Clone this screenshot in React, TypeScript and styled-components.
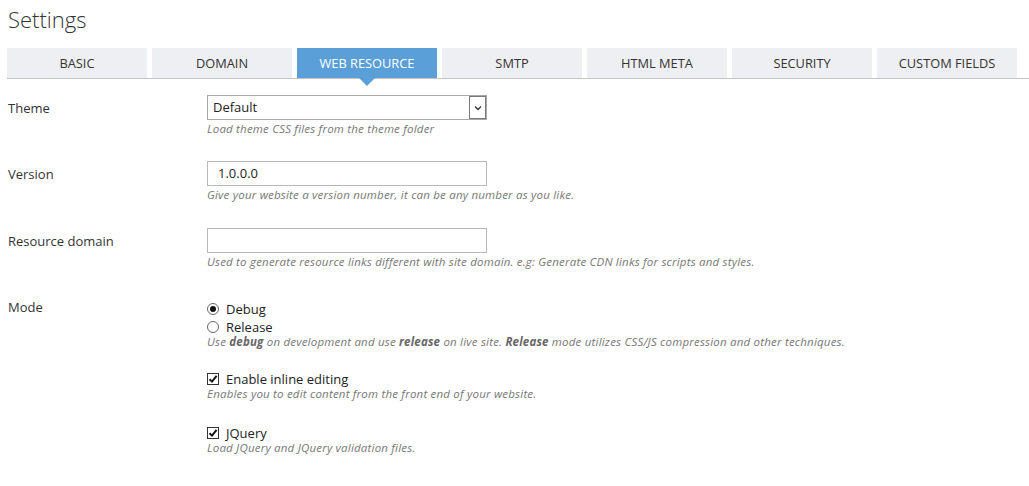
import React from "react";
import styled, { createGlobalStyle } from "styled-components";

const Global = createGlobalStyle`
  html, body { margin: 0; padding: 0; background: #fff; }
  body { font-family: "Open Sans", "Noto Sans", sans-serif; color: #333; }
`;

const Page = styled.div`
  padding: 0 0 0 8px;
`;

const Title = styled.h1`
  margin: 0;
  padding-top: 4px;
  height: 44px;
  font-size: 22px;
  font-weight: 300;
  line-height: 30px;
  color: #333;
`;

const TabBar = styled.div`
  display: flex;
  gap: 5px;
  margin-left: -1px;
  border-bottom: 1px solid #c4c4c4;
  height: 30px;
`;

const Tab = styled.div<{ $active?: boolean }>`
  position: relative;
  width: 140px;
  height: 30px;
  display: flex;
  align-items: center;
  justify-content: center;
  font-size: 12.8px;
  text-transform: uppercase;
  background: ${(p) => (p.$active ? "#5a9fd8" : "#eeeff2")};
  color: ${(p) => (p.$active ? "#fff" : "#333")};
  ${(p) =>
    p.$active &&
    `
    &::after {
      content: "";
      position: absolute;
      left: 50%;
      top: 30px;
      margin-left: -8px;
      border-left: 8px solid transparent;
      border-right: 8px solid transparent;
      border-top: 8px solid #5a9fd8;
    }
  `}
`;

const Form = styled.div`
  padding-top: 16px;
`;

const Row = styled.div<{ $mb?: number }>`
  display: flex;
  margin-bottom: ${(p) => p.$mb ?? 25}px;
`;

const Label = styled.div`
  width: 199px;
  flex: none;
  font-size: 13px;
  line-height: 25px;
  padding-top: 1px;
`;

const Control = styled.div`
  display: flex;
  flex-direction: column;
`;

const Field = styled.div`
  box-sizing: border-box;
  width: 280px;
  height: 25px;
  border: 1px solid #b9b9b9;
  font-size: 13px;
  line-height: 23px;
  padding-left: 10px;
  color: #222;
  background: #fff;
`;

const SelectBox = styled.div`
  position: relative;
  box-sizing: border-box;
  width: 280px;
  height: 25px;
  border: 1px solid #a9a9a9;
  font-size: 13px;
  line-height: 23px;
  padding-left: 5px;
  color: #222;
  background: #fff;
`;

const SelectArrow = styled.div`
  position: absolute;
  right: 0;
  top: 0;
  width: 17px;
  height: 23px;
  box-sizing: border-box;
  border: 1px solid #7a7a7a;
  display: flex;
  align-items: center;
  justify-content: center;
  background: #fff;
`;

const Help = styled.div<{ $mt?: number }>`
  font-size: 11.5px;
  letter-spacing: 0.2px;
  font-style: italic;
  color: #777;
  line-height: 15px;
  margin-top: ${(p) => p.$mt ?? 1}px;
  white-space: nowrap;
  b { font-weight: 700; color: #666; }
`;

const Options = styled.div<{ $mt?: number }>`
  display: flex;
  flex-direction: column;
  margin-top: ${(p) => p.$mt ?? 0}px;
`;

const Option = styled.div`
  display: flex;
  align-items: center;
  height: 18px;
  font-size: 13px;
  gap: 7px;
  color: #222;
`;

const Radio = styled.span<{ $on?: boolean }>`
  box-sizing: border-box;
  width: 12px;
  height: 12px;
  border-radius: 50%;
  border: 1px solid #666;
  display: flex;
  align-items: center;
  justify-content: center;
  &::after {
    content: "";
    width: 6px;
    height: 6px;
    border-radius: 50%;
    background: ${(p) => (p.$on ? "#111" : "transparent")};
  }
`;

const Box = styled.span`
  box-sizing: border-box;
  width: 12px;
  height: 12px;
  border: 1px solid #333;
  display: flex;
  align-items: center;
  justify-content: center;
  background: #fff;
`;

const Check = () => (
  <Box>
    <svg width="10" height="10" viewBox="0 0 10 10">
      <path d="M1.5 5.2 L4 7.6 L8.6 1.8" fill="none" stroke="#111" strokeWidth="1.9" />
    </svg>
  </Box>
);

const tabs = ["Basic", "Domain", "Web Resource", "SMTP", "HTML Meta", "Security", "Custom Fields"];

export default function App() {
  return (
    <Page>
      <Global />
      <Title>Settings</Title>
      <TabBar>
        {tabs.map((t) => (
          <Tab key={t} $active={t === "Web Resource"}>
            {t}
          </Tab>
        ))}
      </TabBar>
      <Form>
        <Row>
          <Label>Theme</Label>
          <Control>
            <SelectBox>
              Default
              <SelectArrow>
                <svg width="8" height="6" viewBox="0 0 8 6">
                  <path d="M1 1.5 L4 4.5 L7 1.5" fill="none" stroke="#333" strokeWidth="1.3" />
                </svg>
              </SelectArrow>
            </SelectBox>
            <Help>Load theme CSS files from the theme folder</Help>
          </Control>
        </Row>
        <Row $mb={26}>
          <Label>Version</Label>
          <Control>
            <Field>1.0.0.0</Field>
            <Help>Give your website a version number, it can be any number as you like.</Help>
          </Control>
        </Row>
        <Row $mb={25}>
          <Label>Resource domain</Label>
          <Control>
            <Field />
            <Help>Used to generate resource links different with site domain. e.g: Generate CDN links for scripts and styles.</Help>
          </Control>
        </Row>
        <Row $mb={21}>
          <Label>Mode</Label>
          <Control>
            <Options $mt={6}>
              <Option>
                <Radio $on />
                Debug
              </Option>
              <Option>
                <Radio />
                Release
              </Option>
            </Options>
            <Help $mt={-2}>
              Use <b>debug</b> on development and use <b>release</b> on live site. <b>Release</b> mode utilizes CSS/JS compression and other techniques.
            </Help>
          </Control>
        </Row>
        <Row $mb={23}>
          <Label />
          <Control>
            <Option>
              <Check />
              Enable inline editing
            </Option>
            <Help $mt={-2}>Enables you to edit content from the front end of your website.</Help>
          </Control>
        </Row>
        <Row>
          <Label />
          <Control>
            <Option>
              <Check />
              JQuery
            </Option>
            <Help $mt={-2}>Load JQuery and JQuery validation files.</Help>
          </Control>
        </Row>
      </Form>
    </Page>
  );
}
